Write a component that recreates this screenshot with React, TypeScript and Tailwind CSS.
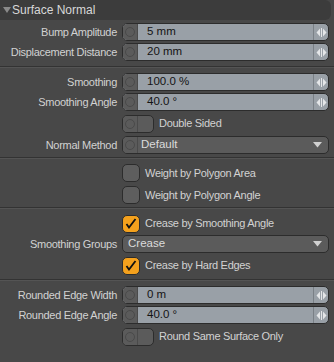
import React from 'react';

const font = { fontFamily: '"Liberation Sans", Arial, sans-serif' };

const Circle = () => (
  <div className="flex w-[15px] shrink-0 items-center justify-center self-stretch bg-[#5b5b5b] border-r border-[#4a4a4a]">
    <div className="h-[10px] w-[10px] rounded-full border border-[#4a4a4a]" />
  </div>
);

const Spinner = () => (
  <div className="flex w-[15px] shrink-0 items-center justify-center self-stretch border-l border-[#7a8086]">
    <svg width="11" height="9" viewBox="0 0 11 9">
      <path d="M4 0.5 L0.5 4.5 L4 8.5 Z" fill="#e4e6e8" />
      <path d="M7 0.5 L10.5 4.5 L7 8.5 Z" fill="#e4e6e8" />
      <rect x="5" y="0" width="1" height="9" fill="#e4e6e8" />
    </svg>
  </div>
);

const Label = ({ text }: { text?: string }) => (
  <div className="w-[122px] shrink-0 pr-[5px] text-right text-[#d2d2d2] whitespace-nowrap">{text}</div>
);

const FieldRow = ({ label, value }: { label: string; value: string }) => (
  <div className="flex h-[20px] items-center">
    <Label text={label} />
    <div className="mr-[5px] flex h-[18px] flex-1 overflow-hidden rounded-[5px] border border-[#2c2c2c] bg-[#99a0a7]">
      <Circle />
      <div className="flex flex-1 items-center pl-[9px] text-[11.5px] tracking-normal text-[#141414]">{value}</div>
      <Spinner />
    </div>
  </div>
);

const Arrow = () => (
  <svg width="9" height="6" viewBox="0 0 9 6" className="mr-[6px]">
    <path d="M0 0 L9 0 L4.5 5.5 Z" fill="#d0d0d0" />
  </svg>
);

const DropRow = ({ label, value, circle }: { label: string; value: string; circle?: boolean }) => (
  <div className="flex h-[20px] items-center">
    <Label text={label} />
    <div className="mr-[5px] flex h-[18px] flex-1 overflow-hidden rounded-[5px] border border-[#2c2c2c] bg-[#5b5b5b]">
      {circle && <Circle />}
      <div className={`flex flex-1 items-center text-[11.5px] tracking-normal text-[#dcdcdc] ${circle ? 'pl-[3px]' : 'pl-[5px]'}`}>
        {value}
      </div>
      <div className="flex items-center">
        <Arrow />
      </div>
    </div>
  </div>
);

const ToggleRow = ({ text, h }: { text: string; h: string }) => (
  <div className={`flex items-center ${h}`}>
    <Label />
    <div className="flex h-[18px] w-[32px] overflow-hidden rounded-[5px] border border-[#2c2c2c] bg-[#5b5b5b]">
      <Circle />
      <div className="flex-1" />
    </div>
    <div className="pl-[5px] text-[#d2d2d2]">{text}</div>
  </div>
);

const Check = ({ text, checked, h }: { text: string; checked?: boolean; h: string }) => (
  <div className={`flex items-center ${h}`}>
    <Label />
    <div
      className={`flex h-[18px] w-[18px] items-center justify-center rounded-[5px] border border-[#2c2c2c] ${
        checked ? 'bg-[#f4a11d]' : 'bg-[#5e5e5e]'
      }`}
    >
      {checked && (
        <svg width="12" height="11" viewBox="0 0 12 11">
          <path d="M1.5 6 L4 9.5 L10.5 1" stroke="#111" strokeWidth="1.8" fill="none" />
        </svg>
      )}
    </div>
    <div className="pl-[5px] text-[#d2d2d2]">{text}</div>
  </div>
);

const Divider = ({ cls }: { cls: string }) => (
  <div className={cls}>
    <div className="h-px bg-[#333333]" />
    <div className="h-px bg-[#545454]" />
  </div>
);

export default function App() {
  return (
    <div className="h-[362px] w-[334px] overflow-hidden bg-[#484848] text-[11px] tracking-[-0.3px]" style={font}>
      <div className="mr-[3px] flex h-[20px] items-center rounded-r-[6px] bg-[#3c3c3c]">
        <svg width="8" height="6" viewBox="0 0 8 6" className="ml-[3px]">
          <path d="M0 0 L8 0 L4 6 Z" fill="#8a8a8a" />
        </svg>
        <span className="pl-[1px] text-[12px] tracking-normal text-[#d8d8d8]">Surface Normal</span>
      </div>
      <div className="mt-[2px]">
        <FieldRow label="Bump Amplitude" value="5 mm" />
        <FieldRow label="Displacement Distance" value="20 mm" />
      </div>
      <Divider cls="pt-[4px] pb-[4px]" />
      <FieldRow label="Smoothing" value="100.0 %" />
      <FieldRow label="Smoothing Angle" value="40.0 °" />
      <ToggleRow text="Double Sided" h="h-[23px]" />
      <DropRow label="Normal Method" value="Default" circle />
      <Divider cls="pt-[2px] pb-[3px]" />
      <Check text="Weight by Polygon Area" h="h-[22px]" />
      <Check text="Weight by Polygon Angle" h="h-[22px]" />
      <Divider cls="pt-[1px] pb-[4px]" />
      <Check text="Crease by Smoothing Angle" checked h="h-[21px]" />
      <DropRow label="Smoothing Groups" value="Crease" />
      <Check text="Crease by Hard Edges" checked h="h-[23px]" />
      <Divider cls="pt-[2px] pb-[4px]" />
      <FieldRow label="Rounded Edge Width" value="0 m" />
      <FieldRow label="Rounded Edge Angle" value="40.0 °" />
      <ToggleRow text="Round Same Surface Only" h="h-[23px]" />
    </div>
  );
}
